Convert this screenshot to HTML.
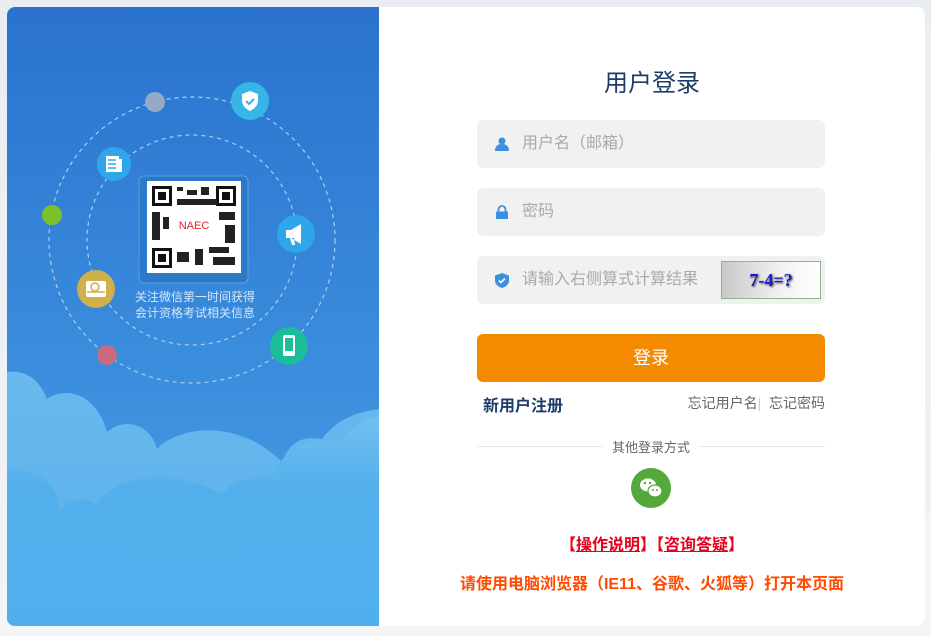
<!DOCTYPE html><html><head><meta charset="utf-8"><style>
*{margin:0;padding:0;box-sizing:border-box}
body{width:931px;height:636px;background:linear-gradient(#e9edf2,#f3f4f6);font-family:"Liberation Sans","Noto Sans CJK SC",sans-serif;position:relative;overflow:hidden}
.card{position:absolute;left:7px;top:7px;width:918px;height:619px;background:#fff;border-radius:8px;overflow:hidden}
.left{position:absolute;left:0;top:0;width:372px;height:619px;background:linear-gradient(#2a72ce,#3b8edd 60%,#4aa2e6)}
.ab{position:absolute}
.inp{position:absolute;left:470px;width:348px;height:48px;background:#f1f1f1;border-radius:6px;color:#a9a9a9;font-size:16px;line-height:48px;padding-left:45px}
.ic{position:absolute;left:18px;top:17px}
</style></head><body><div class="card">
<div class="left">
<svg class="ab" style="left:0;top:0" width="372" height="619">
<defs><linearGradient id="g1" x1="0" y1="0" x2="0" y2="1"><stop offset="0" stop-color="#6ab9ee"/><stop offset="1" stop-color="#56afea"/></linearGradient>
<linearGradient id="g2" x1="0" y1="0" x2="0" y2="1"><stop offset="0" stop-color="#72c0f1"/><stop offset=".35" stop-color="#52afec"/><stop offset="1" stop-color="#4fafec"/></linearGradient></defs>
<path d="M0 365 C25 362 35 380 40 392 C60 378 90 388 100 425 C120 408 145 420 150 442 C170 420 230 410 275 455 C285 430 300 430 315 432 C330 412 350 405 372 402 L372 619 L0 619Z" fill="url(#g1)"/>
<path d="M0 463 C35 458 50 480 52 503 C65 490 80 492 90 498 C110 465 170 460 215 488 C225 470 255 468 265 470 C275 440 310 430 330 437 C345 420 360 410 372 410 L372 619 L0 619Z" fill="url(#g2)"/>
<circle cx="185" cy="233" r="143" fill="none" stroke="#a9cdf2" stroke-width="1.2" stroke-dasharray="4 4"/>
<circle cx="185" cy="233" r="105" fill="none" stroke="#a9cdf2" stroke-width="1.2" stroke-dasharray="4 4"/>
<circle cx="243" cy="94" r="19" fill="#35b6e6"/>
<path d="M243 84 l8 3 v6 c0 6-4 9-8 11 c-4-2-8-5-8-11 v-6z" fill="#fff"/><path d="M239 94 l3 3 5-5" stroke="#35b6e6" stroke-width="2" fill="none"/>
<circle cx="148" cy="95" r="10" fill="#94abc8"/>
<circle cx="107" cy="157" r="17" fill="#2fa6ea"/><rect x="99" y="149" width="13" height="16" fill="#fff"/><rect x="112" y="152" width="3" height="13" fill="#fff"/><path d="M101 153h8M101 157h8M101 161h8" stroke="#2fa6ea" stroke-width="1.5"/>
<circle cx="45" cy="208" r="10" fill="#7cbf2c"/>
<circle cx="289" cy="227" r="19" fill="#2fa6ea"/><path d="M279 223h5l10-6v20l-10-6h-5z M283 231l2 7h3l-1-7z" fill="#fff"/>
<circle cx="89" cy="282" r="19" fill="#cfb04c"/><rect x="79" y="274" width="20" height="16" rx="2" fill="#fff"/><circle cx="88" cy="280" r="4" fill="none" stroke="#cfb04c" stroke-width="1.6"/><path d="M80 285h18" stroke="#cfb04c" stroke-width="1.5"/>
<circle cx="100" cy="348" r="10" fill="#c76a82"/>
<circle cx="282" cy="339" r="19" fill="#1cbd99"/><rect x="276" y="328" width="12" height="21" rx="2" fill="#fff"/><rect x="278" y="331" width="8" height="13" fill="#1cbd99"/>
<rect x="132" y="169" width="109" height="107" rx="5" fill="#2b79c8" stroke="#5a9fe0"/>
<rect x="140" y="174" width="94" height="92" fill="#fff"/>
<g fill="#111"><rect x="145" y="179" width="20" height="20"/><rect x="209" y="179" width="20" height="20"/><rect x="145" y="241" width="20" height="20"/></g>
<g fill="#fff"><rect x="148" y="182" width="14" height="14"/><rect x="212" y="182" width="14" height="14"/><rect x="148" y="244" width="14" height="14"/></g>
<g fill="#111"><rect x="151" y="185" width="8" height="8"/><rect x="215" y="185" width="8" height="8"/><rect x="151" y="247" width="8" height="8"/></g>
<g fill="#222"><rect x="170" y="180" width="6" height="4"/><rect x="180" y="183" width="10" height="5"/><rect x="194" y="180" width="8" height="8"/><rect x="145" y="205" width="8" height="28"/><rect x="156" y="210" width="6" height="12"/><rect x="212" y="205" width="16" height="8"/><rect x="218" y="218" width="10" height="18"/><rect x="170" y="245" width="12" height="10"/><rect x="188" y="242" width="8" height="16"/><rect x="202" y="240" width="20" height="6"/><rect x="206" y="250" width="22" height="8"/><rect x="170" y="192" width="40" height="6"/></g>
<rect x="165" y="204" width="44" height="32" fill="#fff"/>
<text x="187" y="222" font-size="11" fill="#e8202a" text-anchor="middle" font-family="Liberation Sans">NAEC</text>
</svg>
<div class="ab" style="left:118px;top:282px;width:140px;text-align:center;color:#d5e7f8;font-size:12px;line-height:16px">关注微信第一时间获得<br>会计资格考试相关信息</div>
</div>
<div class="ab" style="left:372px;top:56px;width:546px;text-align:center;font-size:24px;color:#1d3c6a">用户登录</div>
<div class="inp" style="top:113px"><svg class="ic" width="14" height="14"><circle cx="7" cy="4" r="3.5" fill="#3d8fe0"/><path d="M0 14c0-5 3-7 7-7s7 2 7 7z" fill="#3d8fe0"/></svg>用户名（邮箱）</div>
<div class="inp" style="top:181px"><svg class="ic" width="14" height="14"><path d="M3.5 7V4.5a3.5 3.5 0 0 1 7 0V7" stroke="#3d8fe0" stroke-width="1.8" fill="none"/><rect x="1" y="6.5" width="12" height="8" rx="1" fill="#3d8fe0"/></svg>密码</div>
<div class="inp" style="top:249px"><svg class="ic" width="14" height="15"><path d="M7 0l7 2.5v5c0 4-3.5 6.5-7 7.5-3.5-1-7-3.5-7-7.5v-5z" fill="#3d8fe0"/><path d="M4 7.5l2 2 4-4" stroke="#fff" stroke-width="1.6" fill="none"/></svg>请输入右侧算式计算结果
<div class="ab" style="left:244px;top:5px;width:100px;height:38px;border:1px solid #8fb58f;background:linear-gradient(90deg,#c8c8c8,#f2f2f2 60%,#fff);color:#1a1ac8;font-weight:bold;font-size:18px;line-height:36px;text-align:center;padding-left:0;font-family:'Liberation Serif',serif;text-shadow:1px 1px 2px #333">7-4=?</div></div>
<div class="ab" style="left:470px;top:327px;width:348px;height:48px;background:#f48a00;border-radius:6px;color:#fff;font-size:18px;line-height:48px;text-align:center">登录</div>
<div class="ab" style="left:476px;top:385px;font-size:16px;font-weight:bold;color:#1d3c6a">新用户注册</div>
<div class="ab" style="left:674px;top:386px;width:144px;text-align:right;font-size:14px;color:#666;white-space:nowrap">忘记用户名<span style="color:#ccc">|</span>&nbsp;&nbsp;忘记密码</div>
<div class="ab" style="left:470px;top:439px;width:348px;height:1px;background:#e6e6e6"></div>
<div class="ab" style="left:596px;top:430px;width:96px;background:#fff;text-align:center;font-size:13px;color:#666">其他登录方式</div>
<svg class="ab" style="left:624px;top:461px" width="40" height="40"><circle cx="20" cy="20" r="20" fill="#55a83a"/><ellipse cx="17" cy="17" rx="8" ry="6.5" fill="#fff"/><ellipse cx="24" cy="23" rx="7" ry="6" fill="#fff" stroke="#55a83a" stroke-width="1.2"/><circle cx="14" cy="15" r="1.2" fill="#55a83a"/><circle cx="19" cy="15" r="1.2" fill="#55a83a"/><circle cx="22" cy="22" r="1" fill="#55a83a"/><circle cx="26" cy="22" r="1" fill="#55a83a"/></svg>
<div class="ab" style="left:372px;top:524px;width:546px;text-align:center;font-size:16px;font-weight:bold;color:#e4001a">【<u>操作说明</u>】【<u>咨询答疑</u>】</div>
<div class="ab" style="left:372px;top:563px;width:546px;text-align:center;font-size:16px;font-weight:bold;color:#ff4a00">请使用电脑浏览器（IE11、谷歌、火狐等）打开本页面</div>
</div></body></html>
